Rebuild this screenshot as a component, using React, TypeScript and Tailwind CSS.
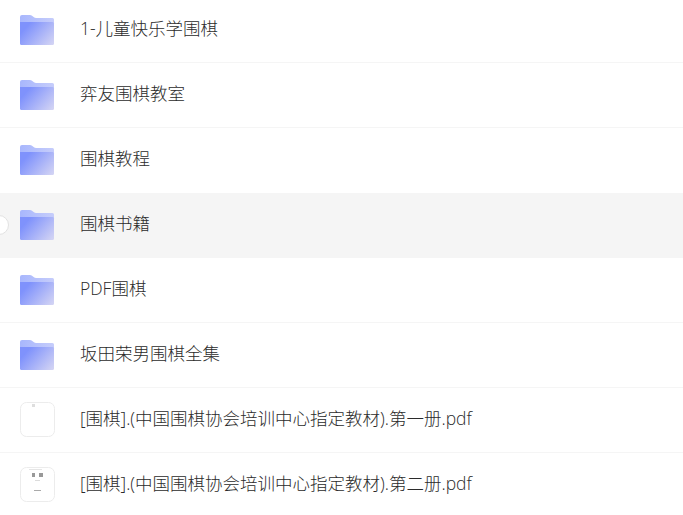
const files = [
  { name: "1-儿童快乐学围棋", type: "folder" },
  { name: "弈友围棋教室", type: "folder", beforeActive: false },
  { name: "围棋教程", type: "folder", beforeActive: true },
  { name: "围棋书籍", type: "folder", active: true },
  { name: "PDF围棋", type: "folder" },
  { name: "坂田荣男围棋全集", type: "folder" },
  { name: "[围棋].(中国围棋协会培训中心指定教材).第一册.pdf", type: "pdf1" },
  { name: "[围棋].(中国围棋协会培训中心指定教材).第二册.pdf", type: "pdf2" },
]

function FolderIcon({ id }: { id: string }) {
  return (
    <svg width="36" height="30" viewBox="0 0 36 30" className="-mt-px block">
      <defs>
        <linearGradient id={id} x1="0" y1="0.3" x2="1" y2="0.9">
          <stop offset="0.1" stopColor="#7f92fc" />
          <stop offset="1" stopColor="#d2d3f4" />
        </linearGradient>
        <linearGradient id={`${id}-tab`} x1="0" y1="0" x2="1" y2="0">
          <stop offset="0" stopColor="#a8b7fd" />
          <stop offset="1" stopColor="#c6cdfb" />
        </linearGradient>
      </defs>
      <path d="M1 7 V2 a2 2 0 0 1 2 -2 H11 c2.5 0 3.5 3 6 3 H33.5 a1.5 1.5 0 0 1 1.5 1.5 V8 H1 Z" fill={`url(#${id}-tab)`} />
      <path d="M1 7 H33.5 a1.5 1.5 0 0 1 1.5 1.5 V28.5 a1.5 1.5 0 0 1 -1.5 1.5 H2.5 A1.5 1.5 0 0 1 1 28.5 Z" fill={`url(#${id})`} />
    </svg>
  )
}

function PdfThumb({ kind }: { kind: string }) {
  return (
    <svg width="36" height="36" viewBox="0 0 36 36" className="block">
      <rect x="1.5" y="0.5" width="34" height="34" rx="6" fill="#fff" stroke="#ececec" />
      {kind === "pdf1" ? (
        <rect x="13" y="2" width="3" height="3" fill="#dedede" />
      ) : (
        <>
          <rect x="10" y="2" width="13" height="1" fill="#e6e6e6" />
          <rect x="13" y="6" width="3" height="4" fill="#999" />
          <rect x="20" y="6" width="4" height="4" fill="#999" />
          <rect x="16" y="13" width="5" height="1" fill="#dcdcdc" />
          <rect x="15" y="23" width="7" height="1" fill="#aaa" />
        </>
      )}
    </svg>
  )
}

export default function App() {
  return (
    <div className="h-[515px] w-[683px] overflow-hidden bg-white font-['Open_Sans','Noto_Sans_CJK_SC',sans-serif]">
      <div className="-mt-[2px]">
        {files.map((f, i) => (
          <div
            key={f.name}
            className={`relative flex h-[65px] items-center border-b pl-[19px] ${f.beforeActive ? "border-white" : "border-[#f5f5f5]"} ${f.active ? "bg-[#f5f5f5]" : "bg-white"}`}
          >
            {f.active && (
              <div className="absolute -left-[11px] top-[22px] h-[20px] w-[20px] rounded-full border border-[#e2e2e2] bg-white" />
            )}
            <div className="flex w-[61px] shrink-0">
              {f.type === "folder" ? <FolderIcon id={`folder-${i}`} /> : <PdfThumb kind={f.type} />}
            </div>
            <span className="-mt-[4px] text-[17.5px] font-light text-[#2b2b2b]">{f.name}</span>
          </div>
        ))}
      </div>
    </div>
  )
}
